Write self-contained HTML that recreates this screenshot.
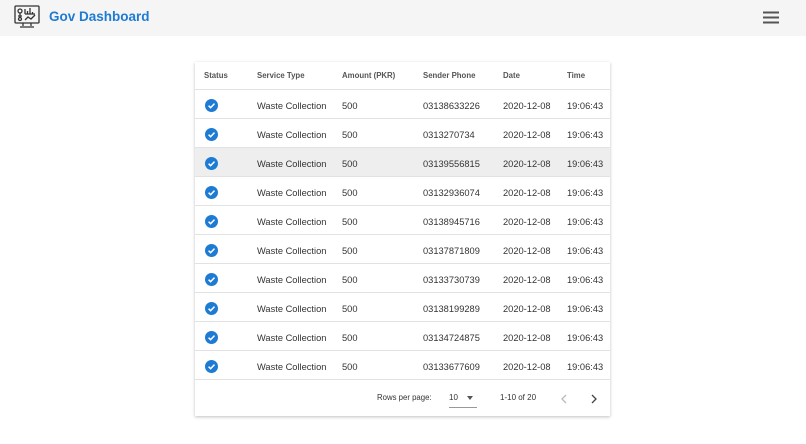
<!DOCTYPE html><html><head><style>
body{margin:0;width:806px;height:444px;background:#fff;font-family:"Liberation Sans",sans-serif;position:relative;overflow:hidden}
.hdr{position:absolute;left:0;top:0;width:806px;height:36px;background:#f5f5f5}
.title{position:absolute;left:49px;top:9px;font-size:13.5px;font-weight:bold;color:#1e7bd4}
.card{position:absolute;left:195px;top:62px;width:415px;height:354px;background:#fff;box-shadow:0 1px 3px rgba(0,0,0,.25)}
.row{position:absolute;left:0;width:415px;height:29px;border-bottom:1px solid #e2e2e2;box-sizing:border-box;font-size:9.3px;color:#333}
.row span{position:absolute;top:10px}
.h span{font-size:7.8px;font-weight:bold;color:#555;top:9px}
.chk{position:absolute;left:10px;top:8px;width:13px;height:13px;border-radius:50%;background:#1e7bd4}
</style></head><body>
<div class="hdr">
<svg style="position:absolute;left:14px;top:5px" width="26" height="25" viewBox="0 0 26 25" fill="none" stroke="#333" stroke-width="1.3"><rect x="1" y="1" width="24" height="17" rx="1"/><path d="M9 18v3M17 18v3M6 22h14"/><circle cx="6" cy="6" r="2"/><path d="M6 8v5M4 11h4"/><circle cx="6" cy="14" r="1.5"/><path d="M11 9V4M13.5 9V6M16 9V3M18.5 9V7M11 9h10M11 15l3-3 3 2 4-4"/></svg>
<div class="title">Gov Dashboard</div>
<svg style="position:absolute;left:763px;top:11px" width="16" height="13"><path d="M0 1.5h16M0 6.5h16M0 11.5h16" stroke="#555" stroke-width="2"/></svg>
</div>
<div class="card">
<div class="row h" style="top:0;height:28px"><span style="left:9px">Status</span><span style="left:62px">Service Type</span><span style="left:147px">Amount (PKR)</span><span style="left:228px">Sender Phone</span><span style="left:308px">Date</span><span style="left:372px">Time</span></div>
<div id="rows"></div>
<div style="position:absolute;top:331px;left:182px;font-size:7.8px;color:#333">Rows per page:</div>
<div style="position:absolute;top:331px;left:254px;font-size:8px;color:#333">10</div>
<div style="position:absolute;left:272px;top:334px;width:0;height:0;border-left:3.5px solid transparent;border-right:3.5px solid transparent;border-top:4px solid #555"></div>
<div style="position:absolute;left:254px;top:345px;width:28px;height:1px;background:#999"></div>
<div style="position:absolute;top:331px;left:305px;font-size:8px;color:#333">1-10 of 20</div>
<svg style="position:absolute;left:365px;top:332px" width="8" height="10"><path d="M6 1L2 5l4 4" stroke="#bbb" stroke-width="1.3" fill="none"/></svg>
<svg style="position:absolute;left:395px;top:332px" width="8" height="10"><path d="M2 1l4 4-4 4" stroke="#444" stroke-width="1.3" fill="none"/></svg>
</div>
<script>
var p=["03138633226","0313270734","03139556815","03132936074","03138945716","03137871809","03133730739","03138199289","03134724875","03133677609"],h="";
p.forEach(function(n,i){h+='<div class="row" style="top:'+(28+i*29)+'px;'+(i==2?'background:#eee':'')+'"><div class="chk" style="top:9px"><svg width="13" height="13" style="position:absolute;left:0;top:0"><path d="M3.6 6.7l2 2 3.9-4.1" stroke="#fff" stroke-width="1.5" fill="none"/></svg></div><span style="left:62px;top:11px">Waste Collection</span><span style="left:147px;top:11px">500</span><span style="left:228px;top:11px">'+n+'</span><span style="left:308px;top:11px">2020-12-08</span><span style="left:372px;top:11px">19:06:43</span></div>'});
document.getElementById("rows").innerHTML=h;
</script>
</body></html>
